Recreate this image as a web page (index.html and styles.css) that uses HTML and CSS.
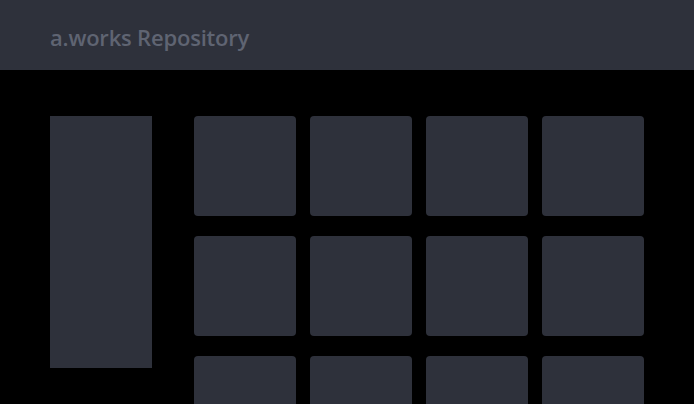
FILE: index.html
```html
<!DOCTYPE html>
<html>
<head>
<meta charset="utf-8">
<link rel="stylesheet" href="styles.css">
</head>
<body>
<header class="header"><h1 class="title">a.works Repository</h1></header>
<main class="main">
  <aside class="sidebar"></aside>
  <section class="grid">
    <div class="card"></div><div class="card"></div><div class="card"></div><div class="card"></div>
    <div class="card"></div><div class="card"></div><div class="card"></div><div class="card"></div>
    <div class="card"></div><div class="card"></div><div class="card"></div><div class="card"></div>
  </section>
</main>
</body>
</html>
```
FILE: styles.css
```css
html, body { margin: 0; padding: 0; background: #000; }
body { font-family: "Open Sans", "Noto Sans", sans-serif; overflow: hidden; height: 404px; }
.header { height: 70px; background: #2e313b; display: flex; align-items: center; padding-left: 50px; }
.title { margin: 0; font-size: 22px; font-weight: 600; color: #5f6472; letter-spacing: -0.2px; padding-top: 4px; }
.main { display: flex; gap: 42px; padding: 46px 50px 0; }
.sidebar { width: 102px; height: 252px; background: #2e313b; flex: none; }
.grid { display: grid; grid-template-columns: repeat(4, 102px); grid-auto-rows: 100px; column-gap: 14px; row-gap: 20px; }
.card { background: #2e313b; border-radius: 4px; }
```
